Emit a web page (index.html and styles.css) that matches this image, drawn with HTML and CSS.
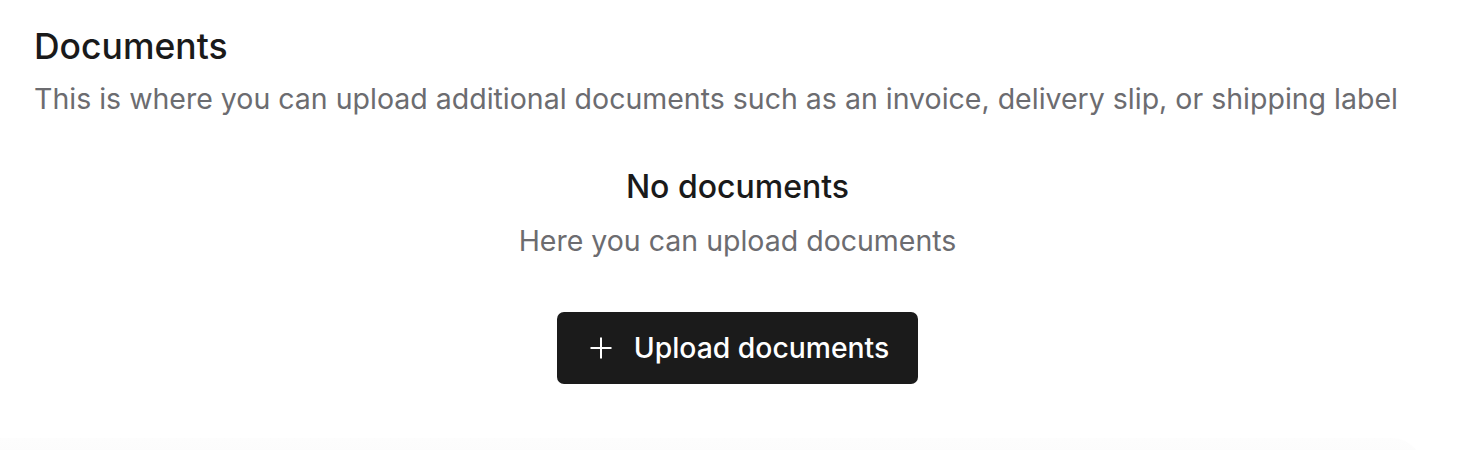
FILE: index.html
```html
<!DOCTYPE html>
<html>
<head>
<meta charset="utf-8">
<link rel="stylesheet" href="styles.css">
</head>
<body>
<section class="panel">
  <header class="head">
    <h1 class="title">Documents</h1>
    <p class="subtitle">This is where you can upload additional documents such as an invoice, delivery slip, or shipping label</p>
  </header>
  <div class="empty">
    <h2 class="empty-title">No documents</h2>
    <p class="empty-text">Here you can upload documents</p>
    <button class="btn" type="button">
      <svg class="plus" width="22" height="22" viewBox="0 0 22 22" aria-hidden="true"><path d="M11 0.5v21M0.5 11h21" stroke="#fff" stroke-width="2" fill="none"/></svg>
      <span>Upload documents</span>
    </button>
  </div>
</section>
<div class="shadow"></div>
</body>
</html>
```

FILE: styles.css
```css
* { box-sizing: border-box; }
html, body { margin: 0; padding: 0; background: #fff; }
body { font-family: Inter, "Noto Sans", sans-serif; color: #18181b; height: 450px; overflow: hidden; position: relative; }
.panel { padding: 25px 34px 0; }
.head { display: flex; flex-direction: column; gap: 10px; }
.title { margin: 0; font-size: 35.5px; line-height: 44px; font-weight: 500; color: #1a1a1a; }
.subtitle { margin: 0; font-size: 28.5px; line-height: 40px; font-weight: 400; color: #6c6c70; }
.empty { display: flex; flex-direction: column; align-items: center; margin-top: 48px; padding-left: 3px; }
.empty-title { margin: 0; font-size: 32px; line-height: 40px; font-weight: 500; color: #1a1a1a; }
.empty-text { margin: 14px 0 0; font-size: 28.5px; line-height: 40px; color: #6c6c70; }
.btn { margin-top: 51px; display: flex; align-items: center; gap: 22px; height: 72px; padding: 0 29px 0 33px; background: #1b1b1b; color: #fff; border: 0; border-radius: 7px; font-family: inherit; font-size: 28.3px; font-weight: 500; }
.plus { display: block; }
.shadow { position: absolute; left: 0; right: 50px; top: 438px; height: 30px; background: linear-gradient(#fdfdfd, #fbfbfb); border-top-right-radius: 30px; }
```
